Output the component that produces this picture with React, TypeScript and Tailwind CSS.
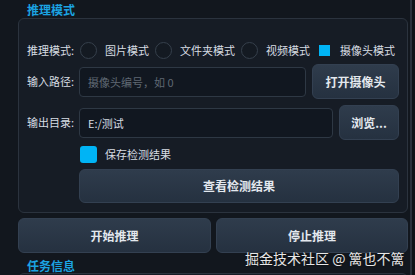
import { useState } from 'react';

const font = { fontFamily: '"Noto Sans CJK SC", "Noto Sans", sans-serif' };

function Radio({ label, checked = false }: { label: string; checked?: boolean }) {
  return (
    <div className="flex items-center mr-[6px]">
      <div className="w-[17px] h-[17px] rounded-full border border-[#36404c] bg-[#141a22] flex items-center justify-center">
        {checked && <div className="w-[9px] h-[9px] rounded-full bg-[#00b4f5]" />}
      </div>
      <span className="ml-[8px] text-[11px] text-[#d6dce3]">{label}</span>
    </div>
  );
}

function Btn({ label, className }: { label: string; className: string }) {
  return (
    <button
      className={`rounded-[6px] border border-[#334051] bg-gradient-to-b from-[#2f3c4c] to-[#253140] text-[12px] font-bold text-[#e3e8ee] ${className}`}
    >
      {label}
    </button>
  );
}

export default function App() {
  const [save, setSave] = useState(true);
  const [path, setPath] = useState('');
  const [out, setOut] = useState('E:/测试');

  return (
    <div className="relative flex w-[415px] h-[275px] overflow-hidden bg-[#12171e]" style={font}>
      <div className="w-[410px] pl-[18px] pr-[2px]">
        {/* 推理模式 */}
        <div className="h-[18px] pl-[9px] pt-[3px] text-[12px] leading-[14px] font-bold text-[#1ba3e2]">推理模式</div>
        <div className="h-[195px] rounded-[6px] border border-[#2b333e] bg-[#161c25] pl-[8px] pt-[23px]">
          <div className="flex items-center h-[17px]">
            <span className="w-[53px] text-[11px] text-[#d6dce3]">推理模式:</span>
            <Radio label="图片模式" />
            <Radio label="文件夹模式" />
            <Radio label="视频模式" />
            <div className="flex items-center">
              <div className="w-[11px] h-[11px] ml-[3px] bg-[#00b4f5]" />
              <span className="ml-[10px] text-[11px] text-[#d6dce3]">摄像头模式</span>
            </div>
          </div>

          <div className="flex items-center mt-[5px] h-[35px]">
            <span className="w-[52px] text-[11px] text-[#d6dce3]">输入路径:</span>
            <input
              value={path}
              onChange={e => setPath(e.target.value)}
              placeholder="摄像头编号，如 0"
              className="w-[227px] h-[30px] rounded-[4px] border border-[#2e3844] bg-[#111720] px-[8px] text-[11px] text-[#d0d6dd] placeholder-[#5f6873] outline-none"
            />
            <Btn label="打开摄像头" className="ml-[6px] w-[87px] h-[35px]" />
          </div>

          <div className="flex items-center mt-[6px] h-[35px]">
            <span className="w-[52px] text-[11px] text-[#d6dce3]">输出目录:</span>
            <input
              value={out}
              onChange={e => setOut(e.target.value)}
              className="w-[254px] h-[30px] rounded-[4px] border border-[#2e3844] bg-[#111720] px-[8px] text-[11px] text-[#d6dce3] outline-none"
            />
            <Btn label="浏览..." className="ml-[6px] w-[60px] h-[35px]" />
          </div>

          <div className="flex items-center mt-[5px] h-[18px] ml-[53px] cursor-pointer" onClick={() => setSave(!save)}>
            <div className={`w-[17px] h-[17px] rounded-[3px] ${save ? 'bg-[#00b4f5]' : 'border border-[#36404c] bg-[#141a22]'}`} />
            <span className="ml-[8px] text-[11px] text-[#d6dce3]">保存检测结果</span>
          </div>

          <Btn label="查看检测结果" className="mt-[6px] ml-[52px] w-[320px] h-[34px] block" />
        </div>

        <div className="flex gap-[5px] mt-[5px]">
          <Btn label="开始推理" className="w-[193px] h-[35px]" />
          <Btn label="停止推理" className="w-[192px] h-[35px]" />
        </div>

        {/* 任务信息 */}
        <div className="h-[20px] pl-[9px] pt-[6px] text-[12px] leading-[14px] font-bold text-[#1ba3e2]">任务信息</div>
        <div className="h-[10px] rounded-t-[6px] border border-[#2b333e] bg-[#161c25]" />
      </div>
      <div className="w-[2px] bg-[#2a313b]" />
      <div className="flex-1 bg-[#0f1318]" />

      <div className="absolute left-[245px] top-[248px] text-[14px] text-white/90 [text-shadow:0_0_2px_rgba(0,0,0,0.8)]">
        掘金技术社区 @ 篱也不篱
      </div>
    </div>
  );
}
